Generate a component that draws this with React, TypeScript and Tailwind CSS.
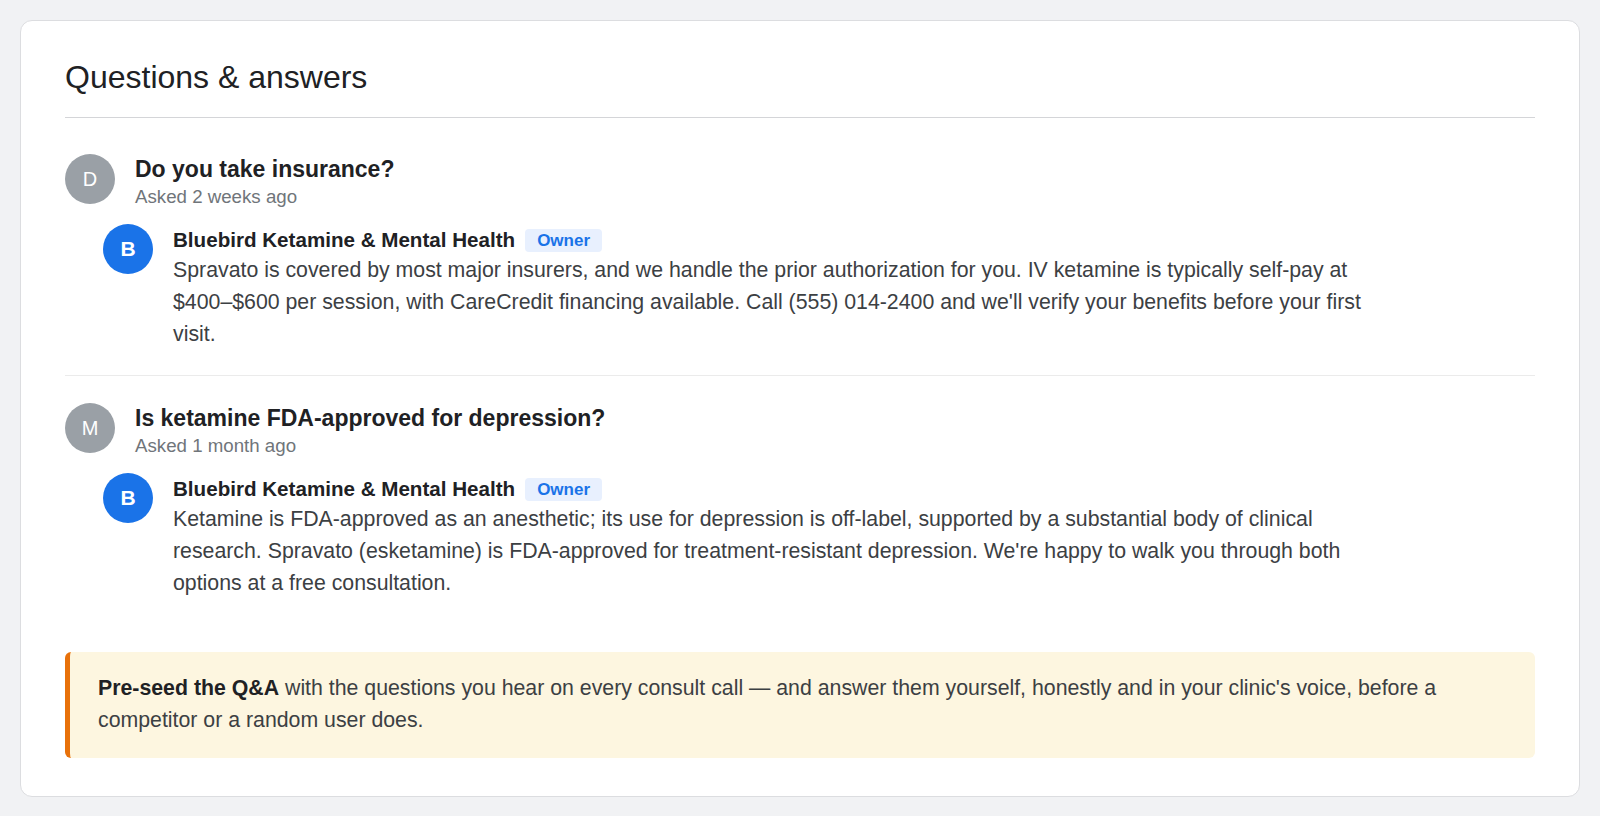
import React from 'react'

interface QAItem {
  initial: string
  question: string
  asked: string
  answer: string
}

const ITEMS: QAItem[] = [
  {
    initial: 'D',
    question: 'Do you take insurance?',
    asked: 'Asked 2 weeks ago',
    answer:
      "Spravato is covered by most major insurers, and we handle the prior authorization for you. IV ketamine is typically self-pay at $400–$600 per session, with CareCredit financing available. Call (555) 014-2400 and we'll verify your benefits before your first visit.",
  },
  {
    initial: 'M',
    question: 'Is ketamine FDA-approved for depression?',
    asked: 'Asked 1 month ago',
    answer:
      "Ketamine is FDA-approved as an anesthetic; its use for depression is off-label, supported by a substantial body of clinical research. Spravato (esketamine) is FDA-approved for treatment-resistant depression. We're happy to walk you through both options at a free consultation.",
  },
]

const BUSINESS = 'Bluebird Ketamine & Mental Health'

function QuestionBlock({ item, first }: { item: QAItem; first: boolean }) {
  return (
    <div className={first ? 'pt-9 pb-[25px] border-b border-[#ebebeb]' : 'pt-[27px]'}>
      {/* Question row */}
      <div className="flex items-start gap-5">
        <div className="w-[50px] h-[50px] shrink-0 rounded-full bg-[#9aa0a6] flex items-center justify-center text-white text-[20px]">
          {item.initial}
        </div>
        <div className="pt-px">
          <div className="text-[23px] leading-[28px] font-bold text-[#202124]">{item.question}</div>
          <div className="text-[18.7px] leading-[28px] text-[#70757a]">{item.asked}</div>
        </div>
      </div>

      {/* Owner answer */}
      <div className="flex items-start gap-5 ml-[38px] mt-[13px]">
        <div className="w-[50px] h-[50px] shrink-0 rounded-full bg-[#1a73e8] flex items-center justify-center text-white text-[21px] font-semibold">
          B
        </div>
        <div className="max-w-[1215px]">
          <div className="flex items-center gap-[10px] h-[30px] pt-[3px]">
            <span className="text-[20.6px] font-bold text-[#202124]">{BUSINESS}</span>
            <span className="h-[23px] px-3 rounded bg-[#e8f0fe] text-[#1a73e8] text-[17px] font-bold flex items-center">
              Owner
            </span>
          </div>
          <p className="text-[21.3px] leading-[32px] text-[#3c4043]">{item.answer}</p>
        </div>
      </div>
    </div>
  )
}

export default function App() {
  return (
    <div
      className="min-h-screen bg-[#f1f2f4] p-5"
      style={{ fontFamily: '"Liberation Sans", Arial, Helvetica, sans-serif' }}
    >
      <div className="bg-white border border-[#dcdde0] rounded-xl px-11 pt-[37px] pb-[38px]">
        <h2 className="text-[32px] leading-[38px] text-[#202124] pb-[21px] border-b border-[#d4d5d8]">
          Questions &amp; answers
        </h2>

        {ITEMS.map((item, i) => (
          <QuestionBlock key={item.initial} item={item} first={i === 0} />
        ))}

        {/* Tip callout */}
        <div className="mt-[53px] bg-[#fdf6e0] border-l-[5px] border-[#e8710a] rounded-md pl-7 pr-8 pt-5 pb-[22px]">
          <p className="text-[21.3px] leading-[32px] text-[#3c4043]">
            <span className="font-bold text-[#202124]">Pre-seed the Q&amp;A</span> with the questions you hear on
            every consult call — and answer them yourself, honestly and in your clinic's voice, before a
            competitor or a random user does.
          </p>
        </div>
      </div>
    </div>
  )
}
